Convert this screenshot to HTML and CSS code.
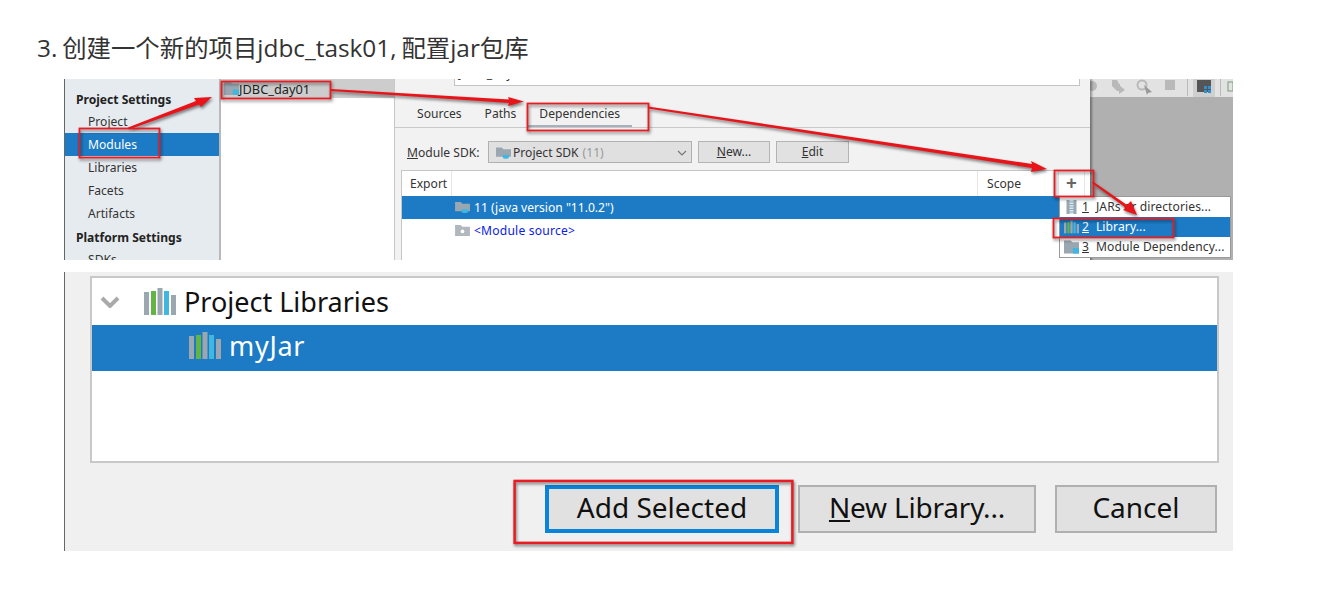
FILE: index.html
```html
<!DOCTYPE html>
<html lang="zh">
<head>
<meta charset="utf-8">
<title>jdbc_task01</title>
<link rel="stylesheet" href="styles.css">
</head>
<body>
<svg class="defs" width="0" height="0" aria-hidden="true">
  <symbol id="lib" viewBox="0 0 32 27">
    <rect class="bar-a" x="0" y="4" width="5" height="23"/>
    <rect x="7" y="3" width="5" height="24" fill="#62b543"/>
    <rect class="bar-a" x="13.500" y="0" width="5" height="27"/>
    <rect x="20" y="3" width="5" height="24" fill="#40b6e0"/>
    <rect class="bar-a" x="27" y="7" width="5" height="20"/>
  </symbol>
  <symbol id="folder" viewBox="0 0 16 14">
    <path d="M0 0h7l2 2h7v12H0z" fill="#9aa7b0"/>
    <rect x="9.500" y="8" width="6.500" height="6" fill="#40b6e0"/>
  </symbol>
  <symbol id="jdk" viewBox="0 0 16 14">
    <path d="M0 1h6l2 2h8v8H0z" fill="#9aa7b0"/>
    <path d="M7 9h7v2a2.500 2.500 0 0 1-2.500 2h-2A2.500 2.500 0 0 1 7 11z" fill="#40b6e0"/>
  </symbol>
</svg>

<h1 class="step">3. 创建一个新的项目jdbc_task01, 配置jar包库</h1>

<figure class="shot shot-ide">
  <nav class="side">
    <div class="side-head">Project Settings</div>
    <div class="side-item">Project</div>
    <div class="side-item is-active">Modules</div>
    <div class="side-item">Libraries</div>
    <div class="side-item">Facets</div>
    <div class="side-item">Artifacts</div>
    <div class="side-head side-head-2">Platform Settings</div>
    <div class="side-item">SDKs</div>
  </nav>
  <section class="modules">
    <div class="module-row"><svg class="ico-module"><use href="#folder"/></svg>JDBC_day01</div>
  </section>
  <section class="panel">
    <div class="name-row">
      <span class="name-label">Name:</span>
      <span class="name-field">JDBC_day01</span>
    </div>
    <div class="tabs">
      <span class="tab">Sources</span>
      <span class="tab">Paths</span>
      <span class="tab is-current">Dependencies</span>
    </div>
    <div class="sdk-row">
      <span class="sdk-label"><u>M</u>odule SDK:</span>
      <span class="sdk-select">
        <svg class="ico-sdk"><use href="#jdk"/></svg>Project SDK <em>(11)</em>
        <svg class="chev-small" viewBox="0 0 10 6"><path d="M1 1l4 4 4-4" fill="none" stroke="#777" stroke-width="1.200"/></svg>
      </span>
      <span class="sdk-btn btn-new"><u>N</u>ew...</span>
      <span class="sdk-btn btn-edit"><u>E</u>dit</span>
    </div>
    <div class="table">
      <div class="thead">
        <span class="th th-export">Export</span>
        <span class="th th-fill"></span>
        <span class="th th-scope">Scope</span>
        <span class="th th-plus">+</span>
        <span class="th th-end"></span>
      </div>
      <div class="tr is-selected"><svg class="ico-row"><use href="#jdk"/></svg>11 (java version "11.0.2")</div>
      <div class="tr tr-link"><svg class="ico-row" viewBox="0 0 16 14"><path d="M0 1h6l2 2h8v10H0z" fill="#b0b8be"/><circle cx="8" cy="8" r="2" fill="#fff"/></svg><span class="link">&lt;Module source&gt;</span></div>
    </div>
  </section>
  <aside class="backdrop">
    <div class="tools">
      <svg class="tool-icons" viewBox="0 0 143 18">
        <g fill="#b9b9b9">
          <circle cx="2" cy="7" r="5"/>
          <path d="M22 1h5l2 4h1v7h-3l-5-5z"/><path d="M29 6l6 5-6 4z"/>
          <circle cx="52" cy="6" r="4.500" fill="none" stroke="#b9b9b9" stroke-width="2"/><path d="M54 6l8 7-4 1-1 2z" fill="#999"/>
          <rect x="75" y="1" width="10" height="10"/>
          <rect x="97" y="0" width="1" height="17"/>
          <rect x="130" y="0" width="1" height="17"/>
        </g>
        <rect x="103" y="0" width="22" height="18" fill="#cfcfcf"/>
        <rect x="107" y="1" width="14" height="12" fill="#555"/>
        <rect x="114" y="7" width="3" height="3" fill="#2f8fcf"/>
        <rect x="118" y="7" width="3" height="3" fill="#2f8fcf"/>
        <rect x="114" y="11" width="3" height="3" fill="#2f8fcf"/>
        <rect x="118" y="11" width="3" height="3" fill="#2f8fcf"/>
        <rect x="138" y="3" width="5" height="9" fill="none" stroke="#7a9a7a"/>
      </svg>
    </div>
  </aside>

  <div class="menu">
    <div class="menu-row"><svg class="ico-menu" viewBox="0 0 14 14"><rect x="2" width="10" height="14" fill="#9aa7b0"/><path d="M7 0v14" stroke="#cfeaf6" stroke-width="4" stroke-dasharray="1.500 1"/></svg><u>1</u><span class="menu-text">JARs or directories...</span></div>
    <div class="menu-row is-selected"><svg class="ico-menu"><use href="#lib"/></svg><u>2</u><span class="menu-text">Library...</span></div>
    <div class="menu-row"><svg class="ico-menu"><use href="#folder"/></svg><u>3</u><span class="menu-text">Module Dependency...</span></div>
  </div>

  <svg class="marks" viewBox="0 0 1169 181">
    <rect x="15.500" y="49.500" width="80" height="29"/>
    <rect x="157.500" y="2.500" width="109" height="17"/>
    <rect x="463.500" y="24.500" width="121" height="27"/>
    <rect x="990.500" y="91.500" width="39" height="26"/>
    <rect x="989.500" y="139.500" width="120" height="19"/>
    <polygon points="64,48.500 132,22 130,19 148,18 137,28 135,25.500 65,50.500"/>
    <polygon points="267,10 445,20.500 444,18 460,22.500 444,27 445,24 267,12"/>
    <polygon points="584,27.500 968,85 967,82 983,90 967,93 968,89 584,29.500"/>
    <polygon points="1029,102.500 1063,126 1067,122 1073,136 1059,131 1062,129 1028,104"/>
  </svg>
</figure>

<figure class="shot shot-dialog">
  <div class="list">
    <div class="list-row list-head">
      <svg class="chev-big" viewBox="0 0 20 12"><path d="M2 2l8 8 8-8" fill="none" stroke="#aaa" stroke-width="4"/></svg>
      <svg class="ico-lib"><use href="#lib"/></svg>
      Project Libraries
    </div>
    <div class="list-row list-sel">
      <svg class="ico-lib"><use href="#lib"/></svg>
      <span class="jar-name">myJar</span>
    </div>
  </div>
  <div class="actions">
    <span class="action action-add">Add Selected</span>
    <span class="action action-new"><u>N</u>ew Library...</span>
    <span class="action action-cancel">Cancel</span>
  </div>
  <svg class="marks" viewBox="0 0 1169 279">
    <rect class="thick" x="450" y="209" width="278" height="62"/>
  </svg>
</figure>
</body>
</html>
```

FILE: styles.css
```css
* { box-sizing: border-box; }

html, body { margin: 0; background: #fff; }

body {
  font-family: "Noto Sans", "Noto Sans CJK SC", sans-serif;
  color: #2c2c2c;
  height: 615px;
  overflow: hidden;
}

.defs { position: absolute; }

.step {
  margin: 0;
  padding: 31px 0 0 37px;
  height: 79px;
  font-family: "Open Sans", "Noto Sans CJK SC", sans-serif;
  font-size: 24.400px;
  line-height: 34px;
  font-weight: 400;
  word-spacing: -1.500px;
  color: #333;
}

.shot {
  position: relative;
  margin: 0 0 12px 64px;
  width: 1169px;
  overflow: hidden;
}

.marks {
  position: absolute;
  inset: 0;
  width: 100%;
  height: 100%;
  overflow: visible;
  filter: drop-shadow(1px 2px 1.500px rgba(0, 0, 0, .5));
}
.marks rect { fill: none; stroke: #e81c22; stroke-width: 1.800; }
.marks rect.thick { stroke-width: 2.500; }
.marks polygon { fill: #e8141a; }

.bar-a { fill: #9aa7b0; }

/* IDE screenshot */
.shot-ide {
  height: 181px;
  display: grid;
  grid-template-columns: 157px 173px 696px 143px;
  font-size: 12.100px;
  color: #333;
}

.side {
  background: #e6ebf0;
  border-left: 1px solid #666;
  border-right: 2px solid #b9b9b9;
  padding-top: 9px;
}
.side-head { height: 22px; line-height: 24px; padding-left: 11px; font-weight: 700; color: #222; }
.side-head-2 { margin-top: 1px; }
.side-item { height: 23px; line-height: 23px; padding-left: 23px; }
.side-item.is-active { background: #1c7bc4; color: #fff; }

.modules { background: #fff; }
.module-row {
  height: 19px;
  background: #cdcdcd;
  display: flex;
  align-items: center;
  padding-left: 3px;
  color: #222;
  font-size: 12.800px;
}
.ico-module { width: 15px; height: 13px; margin-right: 0; }

.panel {
  background: #f2f2f2;
  border-left: 1px solid #c8c8c8;
  display: flex;
  flex-direction: column;
  min-width: 0;
  box-shadow: 2px 0 2px rgba(0,0,0,.35);
  position: relative;
  z-index: 1;
}

.name-row {
  height: 8px;
  display: flex;
  align-items: flex-end;
  overflow: hidden;
  padding: 0 10px 0 11px;
  flex: none;
}
.name-label { width: 48px; height: 20px; line-height: 20px; flex: none; margin-bottom: 2px; }
.name-field {
  flex: 1;
  height: 24px;
  background: #fff;
  border: 1px solid #c4c4c4;
  padding-left: 4px;
  line-height: 22px;
  margin-bottom: 1px;
}

.tabs {
  height: 41px;
  flex: none;
  display: flex;
  align-items: stretch;
  padding-left: 10px;
  border-bottom: 1px solid #c9c9c9;
}
.tab { padding: 17px 11px 0 12px; line-height: 20px; margin-bottom: 0; }
.tab.is-current { box-shadow: inset 0 -2px 0 #a8b0bd; width: 105px; }

.sdk-row {
  flex: none;
  height: 22px;
  margin-top: 13px;
  display: flex;
  align-items: stretch;
  padding-left: 12px;
  line-height: 24px;
}
.sdk-label { width: 81px; flex: none; }
.sdk-select {
  width: 204px;
  flex: none;
  background: #e0e0e0;
  border: 1px solid #b0b0b0;
  display: flex;
  align-items: center;
  padding: 2px 0 0 7px;
  line-height: 20px;
}
.sdk-select em { font-style: normal; color: #999; margin-left: 4px; }
.ico-sdk { width: 15px; height: 14px; margin-right: 2px; }
.chev-small { width: 10px; height: 6px; margin-left: auto; margin-right: 4px; }
.sdk-btn {
  background: #e1e1e1;
  border: 1px solid #b4b4b4;
  text-align: center;
  line-height: 20px;
  flex: none;
}
.btn-new { width: 72px; margin-left: 6px; }
.btn-edit { width: 73px; margin-left: 6px; }

.table {
  margin: 7px 0 0 6px;
  flex: 1;
  background: #fff;
  border-top: 1px solid #c6c6c6;
  border-left: 1px solid #c6c6c6;
}
.thead { height: 25px; display: flex; line-height: 25px; background: #fff; }
.th { border-right: 1px solid #e6e6e6; flex: none; }
.th-export { width: 50px; padding-left: 8px; }
.th-fill { flex: 1; }
.th-scope { width: 81px; padding-left: 9px; }
.th-plus { width: 26px; text-align: center; font-size: 19px; font-weight: 700; color: #666; }
.th-end { width: 5px; border: 0; }

.tr { height: 23px; display: flex; align-items: center; padding-left: 53px; }
.tr.is-selected { background: #1c7bc4; color: #fff; }
.ico-row { width: 15px; height: 13px; margin-right: 4px; }
.link { color: #0a22e6; letter-spacing: 0.200px; }

.backdrop { background: #b0b0b0; }
.tools { height: 18px; background: #e2e2e2; }
.tool-icons { display: block; width: 143px; height: 18px; }

.menu {
  position: absolute;
  left: 995px;
  top: 117px;
  width: 172px;
  height: 62px;
  background: #fff;
  border: 1px solid #9a9a9a;
  z-index: 2;
}
.menu-row {
  height: 20px;
  display: flex;
  align-items: center;
  padding: 0 0 1px 4px;
}
.menu-row.is-selected { background: #1c7bc4; color: #fff; }
.ico-menu { width: 15px; height: 14px; margin-right: 3px; flex: none; }
.menu-text { margin-left: 7px; white-space: nowrap; letter-spacing: 0.100px; }
.shot-ide .marks { z-index: 3; }

/* Dialog screenshot */
.shot-dialog {
  height: 279px;
  background: #f0f0f0;
  border-left: 1px solid #666;
  padding: 4px 14px 0 25px;
  font-size: 27px;
  color: #111;
}

.list {
  height: 187px;
  background: #fff;
  border: 2px solid #c8c8c8;
}
.list-row { display: flex; align-items: center; }
.list-head { height: 47px; }
.list-sel { height: 46px; background: #1c7bc4; color: #fff; padding: 0 0 5px 97px; }
.jar-name { letter-spacing: 0.700px; }
.chev-big { width: 20px; height: 12px; margin-left: 8px; margin-right: 24px; }
.ico-lib { width: 32px; height: 27px; margin-right: 8px; flex: none; }

.actions {
  display: flex;
  justify-content: flex-end;
  gap: 19px;
  margin: 22px 2px 0 0;
  font-size: 28px;
}
.action {
  height: 48px;
  background: #e1e1e1;
  border: 2px solid #b0b0b0;
  text-align: center;
  line-height: 40px;
}
.action-add { width: 234px; border: 4px solid #0a84d8; line-height: 36px; }
.action-new { width: 238px; letter-spacing: -0.200px; }
.action-cancel { width: 162px; }
```
